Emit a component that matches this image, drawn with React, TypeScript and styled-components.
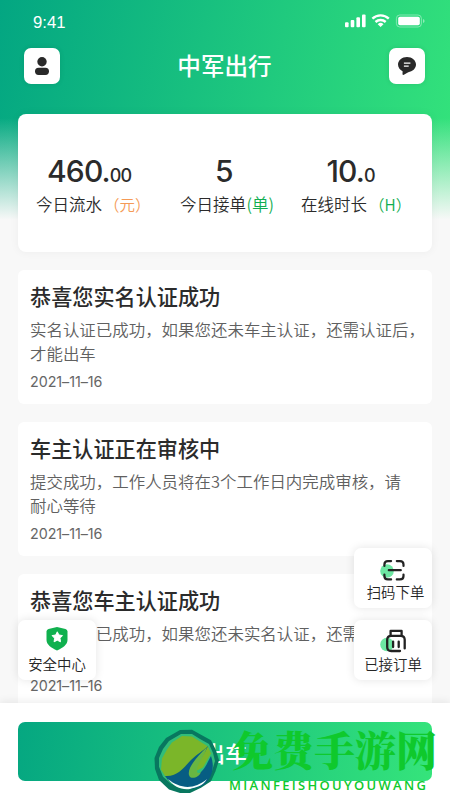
import React from "react";
import styled, { createGlobalStyle, css } from "styled-components";

const Global = createGlobalStyle`
  * { box-sizing: border-box; }
  html, body { margin: 0; padding: 0; }
  body { font-family: "Noto Sans CJK SC", sans-serif; color: #2b2b2b; background: #f8f8f8; }
`;

const Screen = styled.div`
  position: relative;
  width: 450px;
  height: 800px;
  overflow: hidden;
  display: flex;
  flex-direction: column;
  background:
    linear-gradient(180deg, rgba(248, 248, 248, 0) 118px, #f8f8f8 220px),
    linear-gradient(103deg, #03a682 0%, #35e47b 100%) 0 0 / 450px 220px no-repeat,
    #f8f8f8;
`;

const StatusBar = styled.header`
  height: 48px;
  padding: 13px 24px 0 33px;
  display: flex;
  justify-content: space-between;
  align-items: flex-start;
  color: #fff;
`;

const Clock = styled.time`
  padding-top: 1px;
  font: 16.7px/18px "Liberation Sans", sans-serif;
`;

const NavBar = styled.nav`
  height: 36px;
  padding: 0 25px 0 24px;
  display: flex;
  justify-content: space-between;
  align-items: center;
`;

const NavTitle = styled.h1`
  margin: -2px 0 0;
  color: #fff;
  font-size: 23.6px;
  line-height: 36px;
  font-weight: 500;
`;

const NavButton = styled.button`
  width: 36px;
  height: 36px;
  padding: 0;
  border: 0;
  border-radius: 7px;
  background: #fff;
  display: grid;
  place-items: center;
  box-shadow: 0 0 5px rgba(0, 60, 30, 0.12);
`;

const StatsCard = styled.section`
  margin: 30px 18px 18px;
  height: 138px;
  flex: none;
  padding: 38px 0 0;
  display: grid;
  grid-template-columns: 144px 131px 1fr;
  background: #fff;
  border-radius: 8px;
  box-shadow: 0 0 10px rgba(0, 0, 0, 0.05);
`;

const Stat = styled.div<{ $inset: number }>`
  padding-left: ${(p) => p.$inset}px;
  white-space: nowrap;
`;

const Figure = styled.div<{ $inset: number }>`
  height: 38px;
  padding-left: ${(p) => p.$inset}px;
  font: 550 30px/38px Inter, sans-serif;
  letter-spacing: -0.85px;
  small {
    font-size: 18px;
    line-height: 1;
    font-weight: 450;
    letter-spacing: -1px;
  }
`;

const StatLabel = styled.div`
  font-size: 16.5px;
  line-height: 28px;
  font-weight: 350;
`;

const Unit = styled.span<{ $tone: "orange" | "green"; $wide?: boolean }>`
  color: ${(p) => (p.$tone === "orange" ? "#f59a56" : "#10ad50")};
  padding-left: ${(p) => (p.$wide ? 2 : 0.5)}px;
  font-size: ${(p) => (p.$wide ? 15.5 : 16.5)}px;
`;

const Feed = styled.main`
  flex: 1;
  min-height: 0;
  padding: 0 18px;
  display: flex;
  flex-direction: column;
  gap: 18px;
  overflow: hidden;
`;

const Notice = styled.article`
  flex: none;
  height: 134px;
  padding: 10px 0 0 12px;
  background: #fff;
  border-radius: 6px;
`;

const NoticeTitle = styled.h2`
  margin: 0;
  font-size: 21.15px;
  line-height: 32px;
  font-weight: 500;
`;

const NoticeText = styled.p`
  margin: 5px 0 0;
  width: 398px;
  font-size: 16.47px;
  line-height: 24px;
  font-weight: 350;
  color: #606060;
  white-space: pre-line;
`;

const NoticeDate = styled.time`
  display: block;
  margin-top: 8px;
  font: 14.3px/18px Inter, sans-serif;
  letter-spacing: -0.05px;
  color: #666;
`;

const Footer = styled.footer`
  position: relative;
  flex: none;
  height: 97px;
  padding: 19px 18px;
  background: #fff;
  box-shadow: 0 -2px 8px rgba(0, 0, 0, 0.07);
`;

const StartButton = styled.button`
  width: 100%;
  height: 59px;
  padding: 0;
  border: 0;
  border-radius: 7px;
  color: #fff;
  font: 500 22px "Noto Sans CJK SC", sans-serif;
  background: linear-gradient(98deg, #05a781, #35e47b);
`;

const left = css`
  left: 18px;
`;
const right = css`
  right: 18px;
`;

const FloatButton = styled.button<{ $side: "left" | "right"; $top: number }>`
  position: absolute;
  top: ${(p) => p.$top}px;
  ${(p) => (p.$side === "left" ? left : right)}
  width: 78px;
  height: 60px;
  padding: 7px 0 0;
  border: 0;
  border-radius: 7px;
  background: #fff;
  box-shadow: 0 0 10px rgba(0, 0, 0, 0.11);
  display: flex;
  flex-direction: column;
  align-items: center;
  font: 350 14.4px/19px "Noto Sans CJK SC", sans-serif;
  color: #262626;
  white-space: nowrap;
  svg {
    flex: none;
    height: 27px;
  }
`;

const FloatLabel = styled.span<{ $shift: number }>`
  padding-left: ${(p) => p.$shift}px;
`;

const Watermark = styled.div`
  position: absolute;
  left: 151px;
  top: 22px;
  display: flex;
  gap: 8px;
  color: #0fc92c;
`;

const WatermarkWords = styled.div`
  display: flex;
  flex-direction: column;
`;

const WatermarkName = styled.span`
  padding-left: 3px;
  font: 900 41px/48px "Noto Serif CJK SC", "Noto Sans CJK SC", serif;
  white-space: nowrap;
`;

const WatermarkLatin = styled.span`
  margin-top: 4px;
  font: 600 13px/16px "Open Sans", sans-serif;
  letter-spacing: 2.3px;
  white-space: nowrap;
`;

const StatusIcons = () => (
  <svg width="82" height="16" viewBox="0 0 82 16" fill="#fff">
    <rect x="1" y="9.3" width="3.6" height="5" rx="1" />
    <rect x="6.7" y="7" width="3.6" height="7.3" rx="1" />
    <rect x="12.4" y="4.3" width="3.6" height="10" rx="1" />
    <rect x="18" y="1.6" width="3.6" height="12.7" rx="1" />
    <g fill="none" stroke="#fff" strokeWidth="2.4">
      <path d="M28.4 5.6a12 12 0 0 1 16.4 0" />
      <path d="M31.5 9a7.5 7.5 0 0 1 10.2 0" />
    </g>
    <path d="M33.7 11.2a4.2 4.2 0 0 1 5.8 0L36.6 14z" />
    <rect x="52.4" y="2" width="25" height="12" rx="3.4" fill="none" stroke="#fff" strokeOpacity=".4" />
    <rect x="54.2" y="3.8" width="21.6" height="8.4" rx="1.8" />
    <path d="M79 6v4q1.6-.6 1.6-2T79 6z" opacity=".45" />
  </svg>
);

const PersonIcon = () => (
  <svg width="18" height="20" viewBox="0 0 18 20" fill="#292929">
    <circle cx="9" cy="5.8" r="4.7" />
    <rect x="2" y="11.7" width="14" height="7.2" rx="3.6" />
  </svg>
);

const ChatIcon = () => (
  <svg width="20" height="20" viewBox="0 0 20 20">
    <path d="M10 .9c5 0 9 3.3 9 7.7 0 4.2-3.6 7-7.7 7.6L6.4 19l-.9-.4.1-3.3C2.9 14 1 11.5 1 8.6 1 4.2 5 .9 10 .9z" fill="#292929" />
    <path d="M6.9 7.1h6.5M6.9 10.2h4.8" stroke="#fff" strokeWidth="1.3" />
  </svg>
);

const ShieldIcon = () => (
  <svg width="24" height="27" viewBox="0 0 24 27">
    <path d="M12 0 20.500 2.100q2 .5 2 2.500v8.100c0 5-4.500 8-10.500 10.700C6 20.700 1.500 17.700 1.500 12.700V4.600q0-2 2-2.500z" fill="#10b04e" />
    <path d="m12.300 4.800 1.600 3.200 3.600.6-2.500 2.600.5 3.600-3.200-1.600-3.200 1.600.5-3.600L7.100 8.600l3.600-.6z" fill="#fff" stroke="#fff" strokeWidth="1" strokeLinejoin="round" />
  </svg>
);

const ScanIcon = () => (
  <svg width="28" height="27" viewBox="0 0 28 27" fill="none">
    <circle cx="8" cy="16" r="6.8" fill="#6de6a2" />
    <path d="M4.600 11V9.600q0-3.500 3.500-3.500h3.200M17 6.100h3.200q3.500 0 3.500 3.500V11M23.700 19.500v1.400q0 3.500-3.500 3.500H17M11.300 24.400H8.100q-3.500 0-3.500-3.500v-1.400M9 15.200h12" transform="translate(.8 0)" stroke="#222" strokeWidth="2.200" strokeLinecap="round" />
  </svg>
);

const OrdersIcon = () => (
  <svg width="28" height="27" viewBox="0 0 28 27" fill="none">
    <circle cx="8" cy="17.500" r="6.800" fill="#6de6a2" />
    <path d="M10.700 8.600V4.300h11v4.300M24.800 21.800V13.200q0-4-4-4h-9.500q-4 0-4 4v7.200q0 4 4 4h8.800M13.200 15v5.500M18.800 15v5.500" transform="translate(.9 -.4)" stroke="#222" strokeWidth="2.300" strokeLinecap="round" strokeLinejoin="round" />
  </svg>
);

const WatermarkLogo = () => (
  <svg width="70" height="70" viewBox="0 0 70 70">
    <path d="m29 5 12-.3 9 5 10 5.600 5 10 3 10-3.500 11-4.500 10-10 6.500L39 68H29l-11-3.500L8 55 4 44 3.500 33 8 22l7-9z" fill="#08775f" />
    <path d="m30 9 11 0 8 5 9 5 4 9 2 8-3 10-4 8-8 5-10 3.500-10-.3-9-3.500-8-7-4-10V33l4-9 6-8z" fill="#31bd79" />
    <path d="m31 11 10 .5 8 5 8 5 3 7-8 14-24 12-13-2-5-8 1-11 5-9 5-7z" fill="#7bb629" />
    <path d="M14 51c13 1 19-9 26-16 6-6 12-9 17-14-3 8-12 17-13 25 0 5 4 3 7 0 4-4 6-10 9-15 5 14-1 27-12 31-11 4-25 2-34-11z" fill="#075d83" />
    <path d="M38 50c-2-8 10-20 18-28-2 9-11 18-10 24 0 3 3 2 4 1-2 6-11 8-12 3z" fill="#69b642" />
    <path d="M17 54c12 10 26 11 39 0-5 8-11 8-17 10-9 1-16-2-22-10z" fill="#f7fffc" />
  </svg>
);

const notices = [
  {
    title: "恭喜您实名认证成功",
    text: "实名认证已成功，如果您还未车主认证，还需认证后，\n才能出车",
  },
  {
    title: "车主认证正在审核中",
    text: "提交成功，工作人员将在3个工作日内完成审核，请\n耐心等待",
  },
  {
    title: "恭喜您车主认证成功",
    text: "车主认证已成功，如果您还未实名认证，还需认证后，\n才能出车",
  },
];

export default function App() {
  return (
    <>
      <Global />
      <Screen>
        <StatusBar>
          <Clock>9:41</Clock>
          <StatusIcons />
        </StatusBar>
        <NavBar>
          <NavButton aria-label="个人"><PersonIcon /></NavButton>
          <NavTitle>中军出行</NavTitle>
          <NavButton aria-label="消息"><ChatIcon /></NavButton>
        </NavBar>
        <StatsCard>
          <Stat $inset={18}>
            <Figure $inset={11}>460.<small>00</small></Figure>
            <StatLabel>今日流水<Unit $tone="orange" $wide>（元）</Unit></StatLabel>
          </Stat>
          <Stat $inset={18}>
            <Figure $inset={35}>5</Figure>
            <StatLabel>今日接单<Unit $tone="green">(单)</Unit></StatLabel>
          </Stat>
          <Stat $inset={8}>
            <Figure $inset={25.5}>10.<small>0</small></Figure>
            <StatLabel>在线时长<Unit $tone="green" $wide>（H）</Unit></StatLabel>
          </Stat>
        </StatsCard>
        <Feed>
          {notices.map((n) => (
            <Notice key={n.title}>
              <NoticeTitle>{n.title}</NoticeTitle>
              <NoticeText>{n.text}</NoticeText>
              <NoticeDate>2021–11–16</NoticeDate>
            </Notice>
          ))}
        </Feed>
        <FloatButton $side="right" $top={548}>
          <ScanIcon />
          <FloatLabel $shift={5}>扫码下单</FloatLabel>
        </FloatButton>
        <FloatButton $side="left" $top={620}>
          <ShieldIcon />
          <FloatLabel $shift={0}>安全中心</FloatLabel>
        </FloatButton>
        <FloatButton $side="right" $top={620}>
          <OrdersIcon />
          <FloatLabel $shift={0}>已接订单</FloatLabel>
        </FloatButton>
        <Footer>
          <StartButton>出车</StartButton>
          <Watermark>
            <WatermarkLogo />
            <WatermarkWords>
              <WatermarkName>免费手游网</WatermarkName>
              <WatermarkLatin>MIANFEISHOUYOUWANG</WatermarkLatin>
            </WatermarkWords>
          </Watermark>
        </Footer>
      </Screen>
    </>
  );
}
